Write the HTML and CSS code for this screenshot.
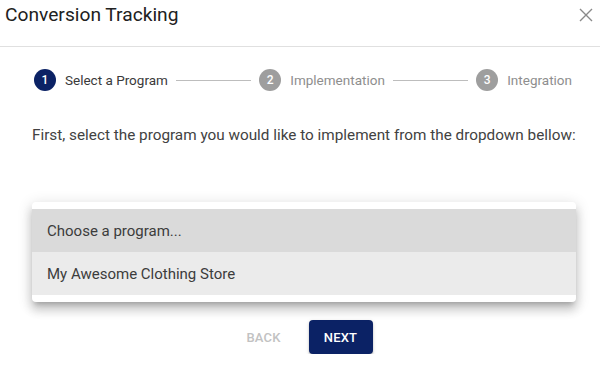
FILE: index.html
```html
<!DOCTYPE html>
<html lang="en">
<head>
<meta charset="utf-8">
<title>Conversion Tracking</title>
<link rel="stylesheet" href="styles.css">
</head>
<body>
<div class="dialog">
  <header class="head">
    <h1 class="title">Conversion Tracking</h1>
    <button class="close" aria-label="Close">
      <svg width="14" height="14" viewBox="0 0 14 14"><path d="M1 1L13 13M13 1L1 13" stroke="#8a8a8a" stroke-width="1.4" fill="none"/></svg>
    </button>
  </header>
  <div class="content">
    <div class="stepper">
      <div class="step active"><span class="num">1</span><span class="label">Select a Program</span></div>
      <div class="line"></div>
      <div class="step"><span class="num">2</span><span class="label">Implementation</span></div>
      <div class="line"></div>
      <div class="step"><span class="num">3</span><span class="label">Integration</span></div>
    </div>
    <p class="intro">First, select the program you would like to implement from the dropdown bellow:</p>
    <div class="menu">
      <div class="opt selected">Choose a program...</div>
      <div class="opt hover">My Awesome Clothing Store</div>
    </div>
    <div class="actions">
      <button class="btn back" disabled>BACK</button>
      <button class="btn next">NEXT</button>
    </div>
  </div>
</div>
</body>
</html>
```

FILE: styles.css
```css
* { box-sizing: border-box; }
html, body { margin: 0; padding: 0; background: #fff; }
body { font-family: Roboto, "Liberation Sans", Arial, sans-serif; color: #424242; }

.head {
  height: 47px;
  border-bottom: 1px solid #e0e0e0;
  display: flex;
  align-items: flex-start;
  justify-content: space-between;
  padding: 0 7px 0 5px;
}
.title {
  margin: 0;
  font-size: 19.2px;
  font-weight: 400;
  line-height: 30px;
  color: #212121;
}
.close {
  border: 0;
  background: none;
  padding: 0;
  margin-top: 8px;
  width: 14px;
  height: 14px;
  display: flex;
}

.content { padding: 0 24px 0 32px; }

.stepper {
  display: flex;
  align-items: center;
  height: 24px;
  margin: 21px 4px 0 2px;
}
.step { display: flex; align-items: center; }
.num {
  width: 22px;
  height: 22px;
  border-radius: 50%;
  background: #9e9e9e;
  color: #fff;
  font-size: 12px;
  font-weight: 500;
  display: flex;
  align-items: center;
  justify-content: center;
}
.label {
  margin-left: 9px;
  font-size: 13.5px;
  color: #8e8e8e;
}
.step.active .num { background: #0b2265; }
.step.active .label { color: #3a3a3a; }
.line {
  flex: 1;
  height: 1px;
  background: #bdbdbd;
  margin: 0 8px;
}

.intro {
  margin: 31px 0 0;
  font-size: 15.3px;
  line-height: 24px;
  color: #424242;
  white-space: nowrap;
}

.menu {
  margin-top: 55px;
  background: #fff;
  border-radius: 4px;
  padding: 7px 0;
  box-shadow: 0 5px 5px -3px rgba(0,0,0,.2), 0 8px 10px 1px rgba(0,0,0,.14), 0 3px 14px 2px rgba(0,0,0,.12);
}
.opt {
  height: 43px;
  display: flex;
  align-items: center;
  padding-left: 15px;
  font-size: 15px;
  color: #3c3c3c;
}
.opt.selected { background: #dadada; }
.opt.hover { background: #ebebeb; }

.actions {
  display: flex;
  justify-content: center;
  gap: 13px;
  margin: 18px 0 0 -4px;
}
.btn {
  width: 64px;
  height: 34px;
  border: 0;
  border-radius: 4px;
  padding: 0;
  font-family: Roboto, "Liberation Sans", Arial, sans-serif;
  font-size: 13px;
  font-weight: 500;
  letter-spacing: 0.2px;
}
.back { background: transparent; color: #c2c2c2; }
.next {
  background: #0b2265;
  color: #fff;
  box-shadow: 0 2px 2px rgba(0,0,0,.2), 0 1px 4px rgba(0,0,0,.12);
}
```
